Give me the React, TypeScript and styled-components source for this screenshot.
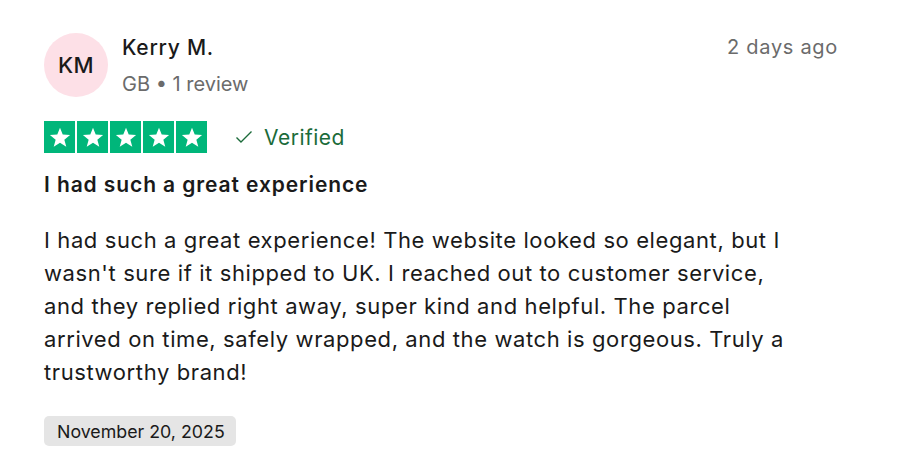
import React from "react";
import styled, { createGlobalStyle } from "styled-components";

const Global = createGlobalStyle`
  html, body { margin: 0; padding: 0; background: #ffffff; }
  body { font-family: Inter, "Noto Sans", "Liberation Sans", sans-serif; color: #1a1a1a; }
`;

const Card = styled.article`
  width: 915px;
  height: 462px;
  box-sizing: border-box;
  padding: 33px 77px 0 44px;
  display: flex;
  flex-direction: column;
`;

const Header = styled.header`
  display: flex;
  align-items: flex-start;
  gap: 14px;
`;

const Avatar = styled.div`
  width: 64px;
  height: 64px;
  border-radius: 50%;
  background: #fde0e7;
  display: flex;
  align-items: center;
  justify-content: center;
  font-size: 22px;
  font-weight: 500;
  letter-spacing: 0.5px;
  color: #1a1a1a;
  flex-shrink: 0;
`;

const Consumer = styled.div`
  display: flex;
  flex-direction: column;
  gap: 11px;
  padding-top: 2px;
  flex: 1;
`;

const Name = styled.div`
  font-size: 21px;
  font-weight: 500;
  letter-spacing: 0.75px;
  line-height: 26px;
  color: #1a1a1a;
`;

const Meta = styled.div`
  font-size: 20px;
  line-height: 24px;
  color: #6b6b6b;
`;

const TimeAgo = styled.time`
  font-size: 20px;
  letter-spacing: 0.7px;
  line-height: 26px;
  color: #6b6b6b;
  padding-top: 1px;
`;

const RatingRow = styled.div`
  display: flex;
  align-items: center;
  gap: 28px;
  margin-top: 24px;
`;

const Stars = styled.div`
  display: flex;
  gap: 2px;
`;

const StarBox = styled.div`
  width: 31px;
  height: 32px;
  background: #00b67a;
  display: flex;
  align-items: center;
  justify-content: center;
`;

const Verified = styled.div`
  display: flex;
  align-items: center;
  gap: 11px;
  font-size: 21px;
  letter-spacing: 0.5px;
  color: #1b6b3a;
`;

const Title = styled.h2`
  margin: 19px 0 0;
  font-size: 21px;
  font-weight: 560;
  letter-spacing: 0.9px;
  line-height: 26px;
  color: #1a1a1a;
`;

const Body = styled.p`
  margin: 26px 0 0;
  font-size: 22px;
  letter-spacing: 0.6px;
  line-height: 33px;
  color: #1a1a1a;
  max-width: 756px;
`;

const DateChip = styled.div`
  align-self: flex-start;
  margin-top: 27px;
  background: #e5e5e5;
  border-radius: 5px;
  padding: 0 11px 0 13px;
  height: 30px;
  display: flex;
  align-items: center;
  font-size: 17.8px;
  color: #1a1a1a;
`;

const Star = () => (
  <svg width="22" height="22" viewBox="0 0 24 24">
    <path
      fill="#ffffff"
      d="M12 1.8l2.95 7.55 8.05.45-6.25 5.1 2.1 7.8L12 18.3l-6.85 4.4 2.1-7.8L1 9.8l8.05-.45z"
    />
  </svg>
);

const Check = () => (
  <svg width="18" height="14" viewBox="0 0 18 14">
    <path d="M1.5 7.5l4.5 4.5L16.5 1.5" fill="none" stroke="#1b6b3a" strokeWidth="1.4" />
  </svg>
);

export default function App() {
  return (
    <>
      <Global />
      <Card>
        <Header>
          <Avatar>KM</Avatar>
          <Consumer>
            <Name>Kerry M.</Name>
            <Meta>GB • 1 review</Meta>
          </Consumer>
          <TimeAgo>2 days ago</TimeAgo>
        </Header>
        <RatingRow>
          <Stars>
            {[0, 1, 2, 3, 4].map((i) => (
              <StarBox key={i}>
                <Star />
              </StarBox>
            ))}
          </Stars>
          <Verified>
            <Check />
            Verified
          </Verified>
        </RatingRow>
        <Title>I had such a great experience</Title>
        <Body>
          I had such a great experience! The website looked so elegant, but I wasn't sure if it
          shipped to UK. I reached out to customer service, and they replied right away, super kind
          and helpful. The parcel arrived on time, safely wrapped, and the watch is gorgeous. Truly a
          trustworthy brand!
        </Body>
        <DateChip>November 20, 2025</DateChip>
      </Card>
    </>
  );
}
